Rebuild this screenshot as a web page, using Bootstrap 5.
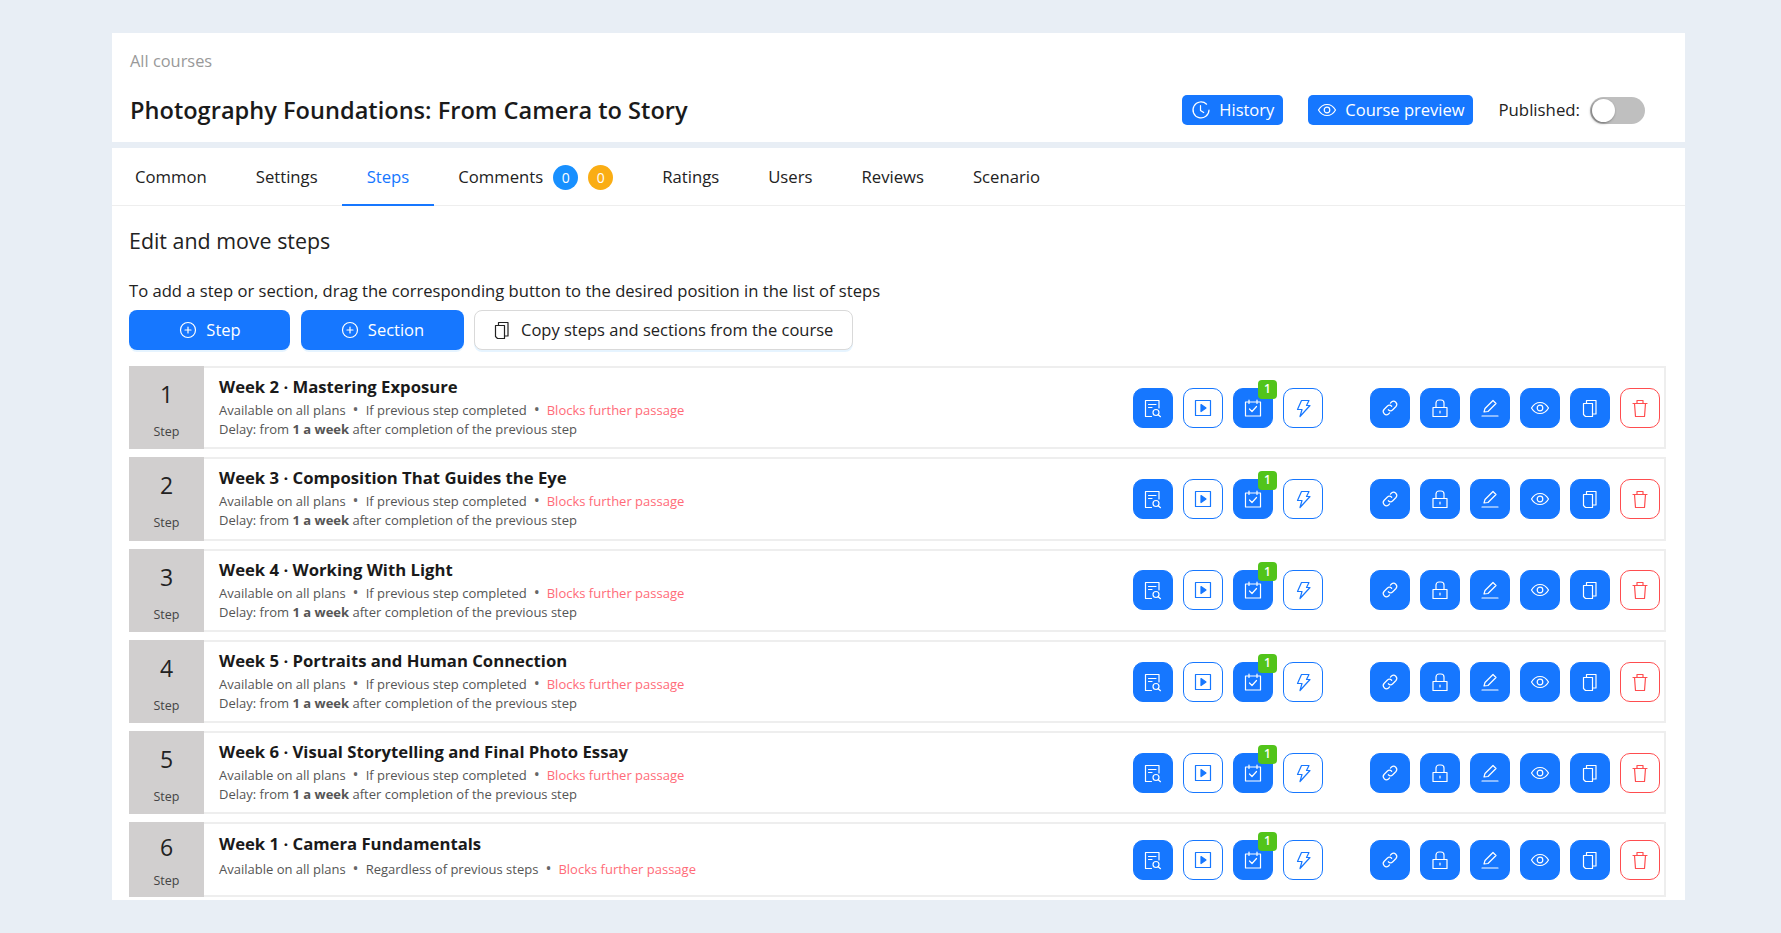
<!DOCTYPE html>
<html lang="en">
<head>
    <meta charset="UTF-8">
    <meta name="viewport" content="width=device-width, initial-scale=1.0">
    <link href="https://cdn.jsdelivr.net/npm/bootstrap@5.3.0/dist/css/bootstrap.min.css" rel="stylesheet">
    <script defer src="https://cdn.jsdelivr.net/npm/bootstrap@5.3.0/dist/js/bootstrap.bundle.min.js"></script>
    <title>Course steps</title>
    <style>
        body {
            background: #e8eef5;
            font-family: "Open Sans", "Liberation Sans", sans-serif;
            color: #222;
            font-size: 15px;
            overflow: hidden;
        }
        .page-wrap { padding: 33px 96px 33px 112px; }
        .ico { width: 20px; height: 20px; fill: none; stroke: currentColor; stroke-width: 1.2; stroke-linecap: round; stroke-linejoin: round; flex: none; }

        /* header */
        .head-panel { background: #fff; height: 109px; padding: 16px 40px 0 18px; margin-bottom: 6px; }
        .crumb { color: #999; font-size: 16.4px; line-height: 24px; }
        .title-line { margin-top: 19px; }
        .course-title { font-size: 23.6px; font-weight: 600; line-height: 36px; margin: 0; color: #1a1a1a; }
        .head-btn { background: #1677ff; color: #fff; border: 0; border-radius: 5px; height: 30px; padding: 0 9px; font-size: 16.5px; gap: 8px; margin-right: 25px; }
        .pub-label { font-size: 16.8px; margin-right: 10px; }
        .pub-switch { width: 55px; height: 27px; border-radius: 14px; background: #bfbfbf; padding: 2px; }
        .pub-knob { width: 23px; height: 23px; border-radius: 50%; background: #fff; box-shadow: -1px 1px 3px rgba(0,0,0,.45); }

        /* tabs */
        .main-panel { background: #fff; height: 752px; overflow: hidden; }
        .tab-strip { height: 58px; border-bottom: 1px solid #eee; }
        .tab-strip .nav-link { color: #222; font-size: 16.7px; padding: 2px 24.5px 0; height: 58px; display: flex; align-items: center; border-bottom: 2px solid transparent; }
        .tab-strip .nav-item:first-child .nav-link { padding-left: 23px; }
        .tab-strip .nav-link.active { color: #1677ff; border-bottom-color: #1677ff; }
        .count-pill { width: 25px; height: 25px; border-radius: 50%; color: #fff; font-size: 14px; margin-left: 10px; }
        .count-pill.is-blue { background: #1890ff; }
        .count-pill.is-orange { background: #faad14; }

        /* steps */
        .steps-body { padding: 19px 19px 0 17px; }
        .steps-title { font-size: 21.4px; font-weight: 400; line-height: 32px; margin: 0 0 22px; }
        .steps-hint { font-size: 16.6px; line-height: 24px; margin-bottom: 7px; }
        .add-btn { height: 40px; border-radius: 8px; font-size: 16.5px; gap: 8px; box-shadow: 0 2px 0 rgba(5,145,255,.1); }
        .add-btn.is-primary { background: #1677ff; color: #fff; border: 0; }
        .add-btn.is-outline { background: #fff; color: #222; border: 1px solid #d9d9d9; padding: 0 19px 0 17px; gap: 9px; }
        .step-add { width: 161px; }
        .section-add { width: 163px; }
        .add-bar { gap: 10.5px; margin-bottom: 16px; }
        .step-row { border: 2px solid #eee; border-left: 0; margin-bottom: 8px; min-height: 83.3px; }
        .step-row.is-short { min-height: 75px; }
        .step-num { width: 75px; background: #d1cfcf; margin: -2px 0; padding-top: 13px; flex: none; }
        .step-num b { font-weight: 400; font-size: 23px; line-height: 30px; color: #222; }
        .step-num span { font-size: 12.5px; line-height: 18px; color: #444; margin-top: 14px; }
        .is-short .step-num { padding-top: 10px; }
        .is-short .step-num span { margin-top: 10px; }
        .step-info { padding: 5px 0 0 15px; }
        .is-short .step-info { padding-top: 6px; }
        .step-name { font-size: 16.7px; font-weight: 700; line-height: 27px; margin-bottom: 1px; color: #1a1a1a; }
        .step-meta { font-size: 13px; line-height: 19px; color: #555; }
        .is-short .step-meta { margin-top: 3px; }
        .step-meta b { font-weight: 700; }
        .meta-dot { margin: 0 7px; color: #666; font-size: 16px; line-height: 0; }
        .meta-warn { color: #ff6b78; }
        .act-btn { width: 40px; height: 40px; border-radius: 10px; border: 1px solid #1677ff; background: #1677ff; color: #fff; }
        .act-btn.is-outline { background: #fff; color: #1677ff; }
        .act-btn.is-danger { background: #fff; color: #ff4d4f; border-color: #ff4d4f; }
        .act-count { top: -9px; right: -5px; width: 19px; height: 19px; border-radius: 4px; background: #52c41a; color: #fff; font-size: 12px; font-weight: 600; }
        .act-group { gap: 10px; }
        .act-wrap { padding-right: 4px; gap: 47px; }
    </style>
</head>
<body>
    <svg width="0" height="0" class="d-block">
        <symbol id="i-history" viewBox="0 0 20 20"><path d="M15.600 4.200A8 8 0 1 0 18 10"/><path d="M9.500 5.500v5l3.200 2"/></symbol>
        <symbol id="i-view" viewBox="0 0 20 20"><path d="M1.500 10s3.200-5.500 8.500-5.500 8.500 5.500 8.500 5.500-3.200 5.500-8.500 5.500S1.500 10 1.500 10z"/><circle cx="10" cy="10" r="2.800"/></symbol>
        <symbol id="i-plus" viewBox="0 0 20 20"><circle cx="10" cy="10" r="7.500"/><path d="M10 7v6M7 10h6"/></symbol>
        <symbol id="i-copy" viewBox="0 0 20 20"><path d="M3.500 5.500h9v13H5.500l-2-2z"/><path d="M6.500 5.500v-3H16v13.500h-3.500"/></symbol>
        <symbol id="i-report" viewBox="0 0 20 20"><path d="M8.500 18.500h-6v-16H16V10"/><path d="M5.500 6.500h7.500M5.500 9.500H9"/><circle cx="13" cy="14.500" r="3"/><path d="M15.200 16.700l2.300 2"/></symbol>
        <symbol id="i-play" viewBox="0 0 20 20"><rect x="2.500" y="2.500" width="15" height="15"/><path d="M8 6.500l5 3.500-5 3.500z" fill="currentColor"/></symbol>
        <symbol id="i-task" viewBox="0 0 20 20"><rect x="2.500" y="4" width="15" height="14"/><path d="M6 2v3.500M14 2v3.500M6.500 11l2.500 2.500 4.500-5"/></symbol>
        <symbol id="i-bolt" viewBox="0 0 20 20"><path d="M8.500 2.500H16L13.500 7.500H17L7 18.500 9 11.500H4.500z"/></symbol>
        <symbol id="i-link" viewBox="0 0 20 20"><path d="M8.300 11.700a3.200 3.200 0 0 0 4.500 0l3.200-3.200a3.200 3.200 0 0 0-4.500-4.500l-1.100 1.100"/><path d="M11.700 8.300a3.200 3.200 0 0 0-4.500 0L4 11.500A3.200 3.200 0 0 0 8.500 16l1.100-1.100"/></symbol>
        <symbol id="i-lock" viewBox="0 0 20 20"><rect x="3" y="9.500" width="14" height="9"/><path d="M6 9.500V5a3 3 0 0 1 3-3h2a3 3 0 0 1 3 3v4.500M10 13v2"/></symbol>
        <symbol id="i-pen" viewBox="0 0 20 20"><path d="M4 14l1-3.500 8-8 3 3-8 8zM2 18h16"/></symbol>
        <symbol id="i-trash" viewBox="0 0 20 20"><path d="M3 5.500h14M7 5.500v-3h6v3M4.500 5.500l1 13h9l1-13"/></symbol>
    </svg>

    <div class="page-wrap">
        <div class="head-panel">
            <div class="crumb">All courses</div>
            <div class="title-line d-flex align-items-center justify-content-between">
                <h1 class="course-title">Photography Foundations: From Camera to Story</h1>
                <div class="d-flex align-items-center">
                    <button class="head-btn d-flex align-items-center"><svg class="ico"><use href="#i-history"/></svg>History</button>
                    <button class="head-btn d-flex align-items-center"><svg class="ico"><use href="#i-view"/></svg>Course preview</button>
                    <span class="pub-label">Published:</span>
                    <div class="pub-switch"><div class="pub-knob"></div></div>
                </div>
            </div>
        </div>

        <div class="main-panel">
            <ul class="nav tab-strip">
                <li class="nav-item"><a class="nav-link" href="#">Common</a></li>
                <li class="nav-item"><a class="nav-link" href="#">Settings</a></li>
                <li class="nav-item"><a class="nav-link active" href="#">Steps</a></li>
                <li class="nav-item"><a class="nav-link" href="#">Comments
                    <span class="count-pill is-blue d-flex align-items-center justify-content-center">0</span>
                    <span class="count-pill is-orange d-flex align-items-center justify-content-center">0</span></a></li>
                <li class="nav-item"><a class="nav-link" href="#">Ratings</a></li>
                <li class="nav-item"><a class="nav-link" href="#">Users</a></li>
                <li class="nav-item"><a class="nav-link" href="#">Reviews</a></li>
                <li class="nav-item"><a class="nav-link" href="#">Scenario</a></li>
            </ul>

            <div class="steps-body">
                <h2 class="steps-title">Edit and move steps</h2>
                <div class="steps-hint">To add a step or section, drag the corresponding button to the desired position in the list of steps</div>
                <div class="add-bar d-flex">
                    <button class="add-btn is-primary d-flex align-items-center justify-content-center step-add"><svg class="ico"><use href="#i-plus"/></svg>Step</button>
                    <button class="add-btn is-primary d-flex align-items-center justify-content-center section-add"><svg class="ico"><use href="#i-plus"/></svg>Section</button>
                    <button class="add-btn is-outline d-flex align-items-center"><svg class="ico"><use href="#i-copy"/></svg>Copy steps and sections from the course</button>
                </div>
                <div id="stepList"></div>
            </div>
        </div>
    </div>

<script>
    const steps = [
        { name: 'Week 2 · Mastering Exposure', delay: true },
        { name: 'Week 3 · Composition That Guides the Eye', delay: true },
        { name: 'Week 4 · Working With Light', delay: true },
        { name: 'Week 5 · Portraits and Human Connection', delay: true },
        { name: 'Week 6 · Visual Storytelling and Final Photo Essay', delay: true },
        { name: 'Week 1 · Camera Fundamentals', delay: false }
    ];

    function actBtn(icon, kind, badge) {
        const count = badge ? '<span class="act-count position-absolute d-flex align-items-center justify-content-center">1</span>' : '';
        return `<div class="act-btn ${kind} position-relative d-flex align-items-center justify-content-center"><svg class="ico"><use href="#${icon}"/></svg>${count}</div>`;
    }

    let html = '';
    steps.forEach(function (step, i) {
        const cond = step.delay ? 'If previous step completed' : 'Regardless of previous steps';
        const delayLine = step.delay ? '<div class="step-meta">Delay: from <b>1 a week</b> after completion of the previous step</div>' : '';
        html += `
        <div class="step-row d-flex align-items-stretch ${step.delay ? '' : 'is-short'}">
            <div class="step-num d-flex flex-column align-items-center"><b>${i + 1}</b><span>Step</span></div>
            <div class="step-info flex-grow-1">
                <div class="step-name">${step.name}</div>
                <div class="step-meta">Available on all plans<span class="meta-dot">•</span>${cond}<span class="meta-dot">•</span><span class="meta-warn">Blocks further passage</span></div>
                ${delayLine}
            </div>
            <div class="act-wrap d-flex align-items-center">
                <div class="act-group d-flex">
                    ${actBtn('i-report', '')}${actBtn('i-play', 'is-outline')}${actBtn('i-task', '', true)}${actBtn('i-bolt', 'is-outline')}
                </div>
                <div class="act-group d-flex">
                    ${actBtn('i-link', '')}${actBtn('i-lock', '')}${actBtn('i-pen', '')}${actBtn('i-view', '')}${actBtn('i-copy', '')}${actBtn('i-trash', 'is-danger')}
                </div>
            </div>
        </div>`;
    });
    document.getElementById('stepList').innerHTML = html;
</script>
</body>
</html>
